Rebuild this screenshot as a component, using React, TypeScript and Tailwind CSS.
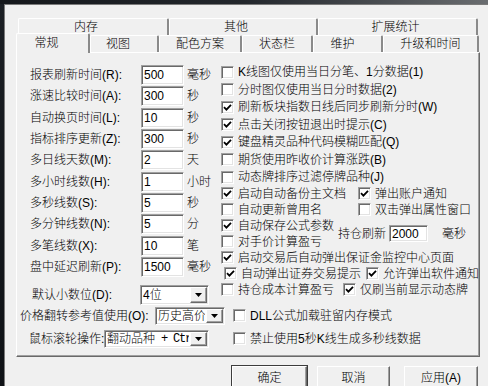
import React from "react"

const sunken =
  "bg-white border border-t-[#a0a0a0] border-l-[#a0a0a0] border-r-white border-b-white shadow-[inset_1px_1px_0_#696969,inset_-1px_-1px_0_#e3e3e3]"
const raised =
  "bg-[#f0f0f0] border border-t-white border-l-white border-r-[#696969] border-b-[#696969] shadow-[inset_-1px_-1px_0_#a0a0a0]"

function Box({ checked }: { checked?: boolean }) {
  return (
    <span className={`w-[13px] h-[13px] shrink-0 flex items-center justify-center ${sunken}`}>
      {checked && (
        <svg width="9" height="9" viewBox="0 0 9 9">
          <path d="M1 4.2 L3.4 6.6 L8 1.8" stroke="#000" strokeWidth="1.8" fill="none" />
        </svg>
      )}
    </span>
  )
}

function Check({ label, checked, className = "" }: { label: string; checked?: boolean; className?: string }) {
  return (
    <div className={`flex items-center gap-[4px] whitespace-nowrap ${className}`}>
      <Box checked={checked} />
      <span>{label}</span>
    </div>
  )
}

function Combo({ value, className }: { value: React.ReactNode; className: string }) {
  return (
    <div className={`flex items-stretch overflow-hidden ${sunken} ${className}`}>
      <span className="flex-1 min-w-0 pl-[2px] flex items-center overflow-hidden whitespace-nowrap">{value}</span>
      <span className={`w-[17px] m-[1px] shrink-0 flex items-center justify-center ${raised}`}>
        <svg width="7" height="4" viewBox="0 0 7 4">
          <path d="M0 0 H7 L3.5 4 Z" fill="#000" />
        </svg>
      </span>
    </div>
  )
}

const fields = [
  { label: "报表刷新时间(R):", value: "500", unit: "毫秒" },
  { label: "涨速比较时间(A):", value: "300", unit: "秒" },
  { label: "自动换页时间(L):", value: "10", unit: "秒" },
  { label: "指标排序更新(Z):", value: "300", unit: "秒" },
  { label: "多日线天数(M):", value: "2", unit: "天" },
  { label: "多小时线数(H):", value: "1", unit: "小时" },
  { label: "多秒线数(S):", value: "5", unit: "秒" },
  { label: "多分钟线数(N):", value: "5", unit: "分" },
  { label: "多笔线数(X):", value: "10", unit: "笔" },
  { label: "盘中延迟刷新(P):", value: "1500", unit: "毫秒" },
]

const topChecks = [
  { label: "K线图仅使用当日分笔、1分数据(1)", checked: false },
  { label: "分时图仅使用当日分时数据(2)", checked: false },
  { label: "刷新板块指数日线后同步刷新分时(W)", checked: true },
  { label: "点击关闭按钮退出时提示(C)", checked: true },
  { label: "键盘精灵品种代码模糊匹配(Q)", checked: true },
  { label: "期货使用昨收价计算涨跌(B)", checked: false },
  { label: "动态牌排序过滤停牌品种(J)", checked: false },
]

const backTabs = [
  { label: "内存", w: "w-[151px] pr-[14px]" },
  { label: "其他", w: "w-[149px] pr-[14px]" },
  { label: "扩展统计", w: "w-[160px] pr-[4px]" },
]

const frontTabs = [
  { label: "视图", w: "w-[69px] pr-[12px]" },
  { label: "配色方案", w: "w-[83px]" },
  { label: "状态栏", w: "w-[71px]" },
  { label: "维护", w: "w-[70px] pr-[10px]" },
  { label: "升级和时间", w: "w-[96px]" },
]

const tabCls =
  "h-full flex items-center justify-center rounded-t-[2px] border-t border-l border-t-white border-l-white border-r-2 border-r-[#8a8a8a]"

export default function App() {
  return (
    <div className="w-[488px] h-[386px] overflow-hidden bg-[#f0f0f0] text-[12px] leading-[14px] font-light text-black font-['Liberation_Sans','Noto_Sans_CJK_SC',sans-serif] flex flex-col">
      <div className="h-[4px] shrink-0 bg-gradient-to-r from-[#15181c] via-[#23272c] to-[#6a6d70]" />
      <div className="flex flex-1 min-h-0">
        <div className="w-[4px] shrink-0 bg-gradient-to-b from-[#1b1f24] to-[#0f1216]" />
        <div className="flex-1 min-w-0 border-l border-t border-[#7a7a7a] pl-[11px] pt-[13px]">
          {/* back tab row */}
          <div className="flex h-[17px] ml-[2px]">
            {backTabs.map((t) => (
              <div key={t.label} className={`${tabCls} ${t.w}`}>
                {t.label}
              </div>
            ))}
          </div>
          {/* front tab row */}
          <div className="flex items-end h-[17px]">
            <div className="relative z-10 w-[74px] h-[20px] -mb-[1px] bg-[#f0f0f0] flex items-center justify-center pr-[12px] pb-[1px] rounded-t-[2px] border-t border-l border-t-white border-l-white border-r-2 border-r-[#8a8a8a]">
              常规
            </div>
            {frontTabs.map((t) => (
              <div key={t.label} className={`${tabCls} ${t.w}`}>
                {t.label}
              </div>
            ))}
          </div>
          {/* panel */}
          <div className="w-[464px] h-[305px] border-t border-l border-t-white border-l-white border-r border-b border-r-[#696969] border-b-[#696969] shadow-[inset_-1px_-1px_0_#a0a0a0] flex flex-col">
            <div className="flex">
              <div className="w-[204px] shrink-0 pt-[11.5px]">
                {fields.map((f) => (
                  <div key={f.label} className="h-[21.3px] flex items-center">
                    <span className="w-[124px] pl-[13px] whitespace-nowrap">{f.label}</span>
                    <span className={`w-[43px] h-[20px] flex items-center pl-[2px] ${sunken}`}>{f.value}</span>
                    <span className="ml-[3px] whitespace-nowrap">{f.unit}</span>
                  </div>
                ))}
                <div className="flex items-center mt-[7.5px] h-[20px]">
                  <span className="w-[123px] pl-[15px] whitespace-nowrap">默认小数位(D):</span>
                  <Combo value="4位" className="w-[69px] h-[20px]" />
                </div>
              </div>
              <div className="flex-1 pt-[10.25px]">
                {topChecks.map((c) => (
                  <div key={c.label} className="h-[17.5px] flex items-center">
                    <Check label={c.label} checked={c.checked} />
                  </div>
                ))}
                <div className="h-[16px] flex items-center">
                  <Check label="启动自动备份主文档" checked className="w-[137px]" />
                  <Check label="弹出账户通知" checked />
                </div>
                <div className="h-[16px] flex items-center">
                  <Check label="自动更新曾用名" className="w-[137px]" />
                  <Check label="双击弹出属性窗口" />
                </div>
                <div className="flex items-center">
                  <div className="w-[117px] shrink-0">
                    <div className="h-[16px] flex items-center">
                      <Check label="自动保存公式参数" checked />
                    </div>
                    <div className="h-[16px] flex items-center">
                      <Check label="对手价计算盈亏" />
                    </div>
                  </div>
                  <span className="w-[51px] whitespace-nowrap">持仓刷新</span>
                  <span className={`w-[39px] h-[17px] flex items-center pl-[2px] ${sunken}`}>2000</span>
                  <span className="ml-[14px] whitespace-nowrap">毫秒</span>
                </div>
                <div className="h-[16px] flex items-center">
                  <Check label="启动交易后自动弹出保证金监控中心页面" checked />
                </div>
                <div className="h-[16px] flex items-center pl-[3px]">
                  <Check label="自动弹出证券交易提示" checked className="w-[142px]" />
                  <Check label="允许弹出软件通知" checked />
                </div>
                <div className="h-[16px] flex items-center">
                  <Check label="持仓成本计算盈亏" className="w-[122px]" />
                  <Check label="仅刷当前显示动态牌" checked />
                </div>
              </div>
            </div>
            <div className="flex items-center h-[18px] mt-[2px] pl-[3px]">
              <span className="w-[135px] whitespace-nowrap">价格翻转参考值使用(O):</span>
              <Combo value="历史高价" className="w-[70px] h-[18px]" />
              <Check label="DLL公式加载驻留内存模式" className="ml-[8px]" />
            </div>
            <div className="flex items-center h-[18px] mt-[5px] pl-[12px]">
              <span className="w-[75px] whitespace-nowrap">鼠标滚轮操作:</span>
              <Combo
                value={
                  <>
                    翻动品种
                    <span className="font-['Liberation_Mono',monospace] tracking-[-1.2px] whitespace-pre"> + Ctrl</span>
                  </>
                }
                className="w-[105px] h-[18px]"
              />
              <Check label="禁止使用5秒K线生成多秒线数据" className="ml-[24px]" />
            </div>
          </div>
          {/* buttons */}
          <div className="flex mt-[9px] ml-[216px]">
            <div className={`w-[75px] h-[23px] flex items-center justify-center ${raised} outline outline-1 outline-[#3c3c3c]`}>确定</div>
            <div className={`w-[73px] h-[23px] ml-[10px] flex items-center justify-center ${raised}`}>取消</div>
            <div className={`w-[74px] h-[23px] ml-[14px] flex items-center justify-center ${raised}`}>应用(A)</div>
          </div>
        </div>
      </div>
    </div>
  )
}
